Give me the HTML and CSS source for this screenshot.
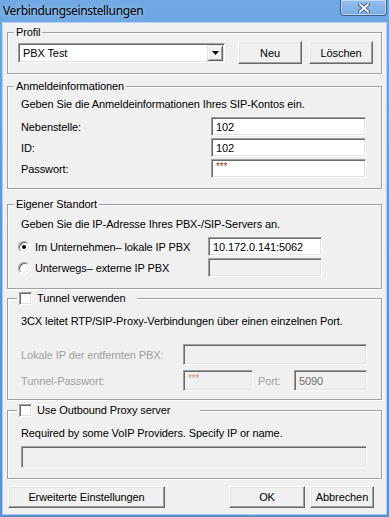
FILE: index.html
```html
<!DOCTYPE html>
<html lang="de">
<head>
    <meta charset="UTF-8">
    <title>Verbindungseinstellungen</title>
    <link rel="stylesheet" href="styles.css">
</head>
<body>
<div class="window">
    <div class="titlebar">
        <span class="title">Verbindungseinstellungen</span>
        <button class="close" type="button" aria-label="Schließen">
            <svg width="12" height="10" viewBox="0 0 12 10">
                <path d="M2 1.5 L10 8.5 M10 1.5 L2 8.5" stroke="#2d4a70" stroke-width="3.6" stroke-linecap="square"/>
                <path d="M2 1.5 L10 8.5 M10 1.5 L2 8.5" stroke="#fff" stroke-width="2" stroke-linecap="square"/>
            </svg>
        </button>
    </div>

    <div class="client">
        <!-- Profil -->
        <div class="group g-profil">
            <span class="legend">Profil</span>
            <div class="profile-row">
                <div class="combo">
                    <span class="combo-text">PBX Test</span>
                    <span class="drop">
                        <svg width="7" height="4" viewBox="0 0 7 4"><path d="M0 0 H7 L3.5 4 Z" fill="#000"/></svg>
                    </span>
                </div>
                <button class="btn btn-new" type="button">Neu</button>
                <button class="btn btn-del" type="button">Löschen</button>
            </div>
        </div>

        <!-- Anmeldeinformationen -->
        <div class="group g-login">
            <span class="legend">Anmeldeinformationen</span>
            <div class="desc">Geben Sie die Anmeldeinformationen Ihres SIP-Kontos ein.</div>
            <div class="rows">
                <div class="field-row">
                    <label class="lbl-wide" for="ext">Nebenstelle:</label>
                    <input class="edit edit-login" id="ext" type="text" value="102">
                </div>
                <div class="field-row">
                    <label class="lbl-wide" for="uid">ID:</label>
                    <input class="edit edit-login" id="uid" type="text" value="102">
                </div>
                <div class="field-row">
                    <label class="lbl-wide" for="pw">Passwort:</label>
                    <input class="edit edit-login pw" id="pw" type="text" value="***">
                </div>
            </div>
        </div>

        <!-- Eigener Standort -->
        <div class="group g-location">
            <span class="legend">Eigener Standort</span>
            <div class="desc">Geben Sie die IP-Adresse Ihres PBX-/SIP-Servers an.</div>
            <div class="rows">
                <div class="field-row">
                    <label class="lbl-wide radio-label"><span class="radio checked"></span>Im Unternehmen– lokale IP PBX</label>
                    <input class="edit edit-ip" type="text" value="10.172.0.141:5062">
                </div>
                <div class="field-row">
                    <label class="lbl-wide radio-label"><span class="radio"></span>Unterwegs– externe IP PBX</label>
                    <input class="edit edit-ip" type="text" value="" disabled>
                </div>
            </div>
        </div>

        <!-- Tunnel -->
        <div class="group g-tunnel">
            <span class="legend legend-check legend-tunnel"><span class="check"></span>Tunnel verwenden</span>
            <div class="desc">3CX leitet RTP/SIP-Proxy-Verbindungen über einen einzelnen Port.</div>
            <div class="rows rows-tunnel">
                <div class="field-row tall">
                    <label class="lbl-tunnel disabled-text">Lokale IP der entfernten PBX:</label>
                    <input class="edit edit-remote" type="text" value="" disabled>
                </div>
                <div class="field-row tall">
                    <label class="lbl-tunnel disabled-text">Tunnel-Passwort:</label>
                    <input class="edit edit-tpw pw" type="text" value="***" disabled>
                    <label class="lbl-port disabled-text">Port:</label>
                    <input class="edit edit-port" type="text" value="5090" disabled>
                </div>
            </div>
        </div>

        <!-- Outbound Proxy -->
        <div class="group g-proxy">
            <span class="legend legend-check legend-proxy"><span class="check"></span>Use Outbound Proxy server</span>
            <div class="desc">Required by some VoIP Providers. Specify IP or name.</div>
            <input class="edit edit-proxy" type="text" value="" disabled>
        </div>

        <div class="footer">
            <button class="btn btn-adv" type="button">Erweiterte Einstellungen</button>
            <button class="btn btn-ok" type="button">OK</button>
            <button class="btn btn-cancel" type="button">Abbrechen</button>
        </div>
    </div>
</div>
</body>
</html>
```

FILE: styles.css
```css
html, body {
    margin: 0;
    padding: 0;
}
body {
    width: 389px;
    height: 517px;
    overflow: hidden;
    font-family: "Liberation Sans", Arial, sans-serif;
    font-size: 11px;
    letter-spacing: -0.1px;
    color: #000;
}
.window {
    width: 389px;
    height: 517px;
    background: linear-gradient(180deg, #70a8e4 0%, #6099da 40%, #5891d4 100%);
    display: flex;
    flex-direction: column;
}
.titlebar {
    height: 23px;
    display: flex;
    align-items: flex-start;
}
.title {
    font-family: "Noto Sans", sans-serif;
    font-size: 12px;
    letter-spacing: -0.35px;
    line-height: 22px;
    padding-left: 3px;
    color: #000;
    text-shadow: 0 0 6px rgba(255, 255, 255, 0.55);
}
.close {
    margin-left: auto;
    margin-right: 2px;
    width: 47px;
    height: 16px;
    padding: 0;
    border: 1px solid #3c5f8a;
    border-top: none;
    border-radius: 0 0 4px 4px;
    background: linear-gradient(180deg, rgba(255, 255, 255, 0.25), rgba(255, 255, 255, 0.08));
    box-shadow: inset 0 0 0 1px rgba(255, 255, 255, 0.45);
    display: flex;
    align-items: center;
    justify-content: center;
}
.close svg {
    display: block;
}
.client {
    margin: 0 3px 3px;
    height: 491px;
    box-sizing: border-box;
    padding-top: 9px;
    background: #f0f0f0;
    box-shadow: 0 0 0 1px rgba(255, 255, 255, 0.5);
}

/* group boxes */
.group {
    position: relative;
    box-sizing: border-box;
    width: 375px;
    margin-left: 4px;
    border: 1px solid #a0a0a0;
    box-shadow: 1px 1px 0 #fff, inset 1px 1px 0 #fff;
    padding: 0 14px 0 13px;
}
.legend {
    position: absolute;
    top: -7px;
    left: 6px;
    padding: 0 2px;
    line-height: 13px;
    background: #f0f0f0;
    white-space: nowrap;
}
.legend-check {
    left: 9px;
    display: flex;
    align-items: center;
    gap: 5px;
    height: 13px;
    box-sizing: border-box;
}
.legend-tunnel {
    width: 120px;
}
.legend-proxy {
    width: 183px;
}
.desc {
    line-height: 13px;
    white-space: nowrap;
}
.g-profil {
    height: 42px;
    padding: 8px 8px 0 10px;
}
.g-login {
    margin-top: 12px;
    height: 103px;
    padding-top: 11px;
}
.g-location {
    margin-top: 15px;
    height: 85px;
    padding-top: 13px;
}
.g-tunnel {
    margin-top: 9px;
    height: 102px;
    padding-top: 16px;
}
.g-proxy {
    margin-top: 10px;
    height: 69px;
    padding-top: 16px;
}

/* rows */
.profile-row {
    display: flex;
    align-items: center;
}
.rows {
    margin-top: 6px;
    display: flex;
    flex-direction: column;
    gap: 2px;
}
.rows-tunnel {
    margin-top: 16px;
    gap: 5px;
}
.field-row {
    display: flex;
    align-items: center;
    height: 19px;
}
.field-row.tall {
    height: 21px;
}
.lbl-wide {
    width: 190px;
    flex: none;
}
.lbl-tunnel {
    width: 162px;
    flex: none;
}
.lbl-port {
    margin-left: 5px;
    width: 36px;
    flex: none;
}
.disabled-text {
    color: #a0a0a0;
}
.radio-label {
    display: flex;
    align-items: center;
    gap: 5px;
    margin-left: -3px;
}

/* classic 3D controls */
.edit {
    box-sizing: border-box;
    height: 100%;
    margin: 0;
    padding: 0 4px;
    border: 1px solid;
    border-color: #a0a0a0 #fff #fff #a0a0a0;
    box-shadow: inset 1px 1px 0 #696969, inset -1px -1px 0 #e3e3e3;
    background: #fff;
    font-family: "Liberation Sans", Arial, sans-serif;
    font-size: 11px;
    letter-spacing: -0.1px;
    color: #000;
    outline: none;
}
.edit:disabled {
    background: #f0f0f0;
    color: #6d6d6d;
}
.edit.pw {
    color: #7a4306;
    font-size: 10px;
    padding-bottom: 5px;
}
.edit.pw:disabled {
    color: #b8a080;
}
.edit-login {
    width: 155px;
}
.edit-ip {
    width: 114px;
}
.edit-remote {
    width: 184px;
}
.edit-tpw {
    width: 70px;
}
.edit-port {
    width: 73px;
}
.edit-proxy {
    display: block;
    margin-top: 6px;
    width: 346px;
    height: 22px;
}
.combo {
    box-sizing: border-box;
    width: 207px;
    height: 20px;
    padding: 1px;
    display: flex;
    align-items: center;
    border: 1px solid;
    border-color: #a0a0a0 #fff #fff #a0a0a0;
    box-shadow: inset 1px 1px 0 #696969, inset -1px -1px 0 #e3e3e3;
    background: #fff;
}
.combo-text {
    flex: 1;
    padding-left: 3px;
    line-height: 16px;
}
.drop {
    box-sizing: border-box;
    width: 16px;
    height: 16px;
    display: flex;
    align-items: center;
    justify-content: center;
    background: #f0f0f0;
    border: 1px solid;
    border-color: #e3e3e3 #696969 #696969 #e3e3e3;
    box-shadow: inset 1px 1px 0 #fff, inset -1px -1px 0 #a0a0a0;
}
.btn {
    box-sizing: border-box;
    height: 23px;
    width: 64px;
    padding: 0;
    background: #f0f0f0;
    border: 1px solid;
    border-color: #fff #696969 #696969 #fff;
    box-shadow: inset -1px -1px 0 #a0a0a0, inset 1px 1px 0 #e3e3e3;
    font-family: "Liberation Sans", Arial, sans-serif;
    font-size: 11px;
    letter-spacing: -0.1px;
    color: #000;
}
.btn-new {
    margin-left: 13px;
}
.btn-del {
    margin-left: 7px;
}
.radio {
    position: relative;
    box-sizing: border-box;
    width: 12px;
    height: 12px;
    flex: none;
    border-radius: 50%;
    border: 1px solid;
    border-color: #a0a0a0 #fff #fff #a0a0a0;
    box-shadow: inset 1px 1px 0 #696969, inset -1px -1px 0 #e3e3e3;
    background: #fff;
}
.radio.checked::after {
    content: "";
    position: absolute;
    left: 3px;
    top: 3px;
    width: 4px;
    height: 4px;
    border-radius: 50%;
    background: #000;
}
.check {
    box-sizing: border-box;
    width: 13px;
    height: 13px;
    flex: none;
    border: 1px solid;
    border-color: #a0a0a0 #fff #fff #a0a0a0;
    box-shadow: inset 1px 1px 0 #696969, inset -1px -1px 0 #e3e3e3;
    background: #fff;
}

/* dialog buttons */
.footer {
    margin-top: 7px;
    margin-left: 5px;
    display: flex;
    height: 22px;
}
.footer .btn {
    height: 22px;
}
.btn-adv {
    width: 157px;
}
.btn-ok {
    width: 76px;
    margin-left: 64px;
}
.btn-cancel {
    margin-left: 5px;
}
```
